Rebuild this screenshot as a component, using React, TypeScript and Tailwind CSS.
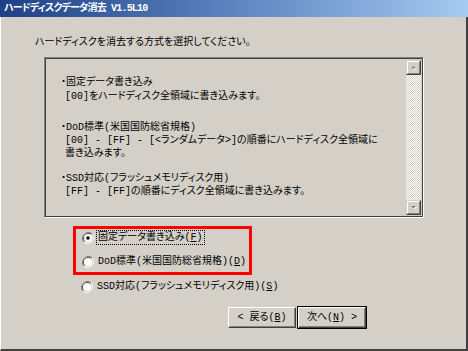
import React from 'react';

// Classic Win2000 style radio button
function Radio({ checked }: { checked?: boolean }) {
  return (
    <svg width="12" height="12" viewBox="0 0 12 12" className="shrink-0">
      <path d="M10.2 1.8A6 6 0 0 0 1.8 10.2" fill="none" stroke="#808080" strokeWidth="1" />
      <path d="M1.8 10.2A6 6 0 0 0 10.2 1.8" fill="none" stroke="#ffffff" strokeWidth="1" />
      <path d="M9.5 2.5A5 5 0 0 0 2.5 9.5" fill="none" stroke="#404040" strokeWidth="1" />
      <path d="M2.5 9.5A5 5 0 0 0 9.5 2.5" fill="none" stroke="#d4d0c8" strokeWidth="1" />
      <circle cx="6" cy="6" r="4" fill="#ffffff" />
      {checked && <circle cx="6" cy="6" r="1.8" fill="#000000" />}
    </svg>
  );
}

function ScrollButton({ down }: { down?: boolean }) {
  return (
    <div className="w-[15px] h-[15px] bg-[#d4d0c8] border border-t-[#d4d0c8] border-l-[#d4d0c8] border-r-[#404040] border-b-[#404040]">
      <div className="w-full h-full border border-t-white border-l-white border-r-[#808080] border-b-[#808080] flex items-center justify-center">
        <svg width="7" height="5" viewBox="0 0 7 5">
          {down ? (
            <>
              <path d="M1 1h5L3.5 3.5z" fill="#ffffff" transform="translate(1 1)" />
              <path d="M1 1h5L3.5 3.5z" fill="#808080" />
            </>
          ) : (
            <>
              <path d="M1 3.5h5L3.5 1z" fill="#ffffff" transform="translate(1 1)" />
              <path d="M1 3.5h5L3.5 1z" fill="#808080" />
            </>
          )}
        </svg>
      </div>
    </div>
  );
}

function Button({ children, isDefault }: { children: React.ReactNode; isDefault?: boolean }) {
  return (
    <div className={isDefault ? 'border border-black' : 'border border-transparent'}>
      <div className="w-[68px] h-[21px] border border-t-white border-l-white border-r-[#404040] border-b-[#404040]">
        <div className="w-full h-full border border-t-[#d4d0c8] border-l-[#d4d0c8] border-r-[#808080] border-b-[#808080] flex items-center justify-center whitespace-nowrap">
          {children}
        </div>
      </div>
    </div>
  );
}

export default function App() {
  return (
    <div className="w-[468px] h-[351px] flex flex-col bg-[#d4d0c8] text-black text-[10px] leading-[13px] font-['Liberation_Mono','Noto_Sans_CJK_JP',monospace] [font-feature-settings:'palt']">
      {/* タイトルバー */}
      <div className="h-[17px] shrink-0 flex items-center pl-[4px] bg-gradient-to-r from-[#1e4186] via-[#5f84c0] to-[#a6caf0] text-white font-bold text-[10px] tracking-[-0.8px]">
        ハードディスクデータ消去 V1.5L10
      </div>

      <div className="flex-1 flex flex-col border-l border-l-white border-r-2 border-r-[#404040] border-b-2 border-b-[#404040]">
        <p className="mt-[19px] ml-[34px] whitespace-nowrap">ハードディスクを消去する方式を選択してください。</p>

        {/* 説明テキストボックス */}
        <div className="mt-[8px] ml-[43px] w-[380px] h-[161px] flex border border-t-[#808080] border-l-[#808080] border-r-white border-b-white">
          <div className="flex-1 flex border border-[#404040]">
            <div className="flex-1 pt-[17px] pl-[15px] whitespace-nowrap">
              <p>・固定データ書き込み</p>
              <p className="pl-[4px] mt-[1px]">[00]をハードディスク全領域に書き込みます。</p>
              <p className="mt-[18px]">・DoD標準(米国国防総省規格)</p>
              <p className="pl-[4px]">[00] - [FF] - [&lt;ランダムデータ&gt;]の順番にハードディスク全領域に</p>
              <p className="pl-[4px]">書き込みます。</p>
              <p className="mt-[12px]">・SSD対応(フラッシュメモリディスク用)</p>
              <p className="pl-[4px]">[FF] - [FF]の順番にディスク全領域に書き込みます。</p>
            </div>
            <div className="w-[15px] flex flex-col mr-[1px] mt-[1px] mb-[1px] bg-[repeating-conic-gradient(#ffffff_0_25%,#d4d0c8_0_50%)] bg-[length:2px_2px]">
              <ScrollButton />
              <div className="flex-1" />
              <ScrollButton down />
            </div>
          </div>
        </div>

        {/* 消去方式の選択 */}
        <div className="mt-[8px] ml-[72px] w-[179px] h-[49px] border-[3px] border-[#ff0000] flex flex-col pl-[6px] pt-[2px] gap-[11px] whitespace-nowrap">
          <label className="flex items-center gap-[3px]">
            <Radio checked />
            <span className="px-[1px] outline outline-1 outline-dotted outline-black">
              固定データ書き込み(<span className="underline">F</span>)
            </span>
          </label>
          <label className="flex items-center gap-[3px]">
            <Radio />
            <span className="px-[1px]">
              DoD標準(米国国防総省規格)(<span className="underline">D</span>)
            </span>
          </label>
        </div>
        <label className="mt-[5px] ml-[80px] flex items-center gap-[3px] whitespace-nowrap">
          <Radio />
          <span className="px-[1px]">
            SSD対応(フラッシュメモリディスク用)(<span className="underline">S</span>)
          </span>
        </label>

        {/* ボタン */}
        <div className="mt-[13px] ml-[226px] flex">
          <Button>
            &lt; 戻る(<span className="underline">B</span>)
          </Button>
          <Button isDefault>
            次へ(<span className="underline">N</span>) &gt;
          </Button>
        </div>
      </div>
    </div>
  );
}
